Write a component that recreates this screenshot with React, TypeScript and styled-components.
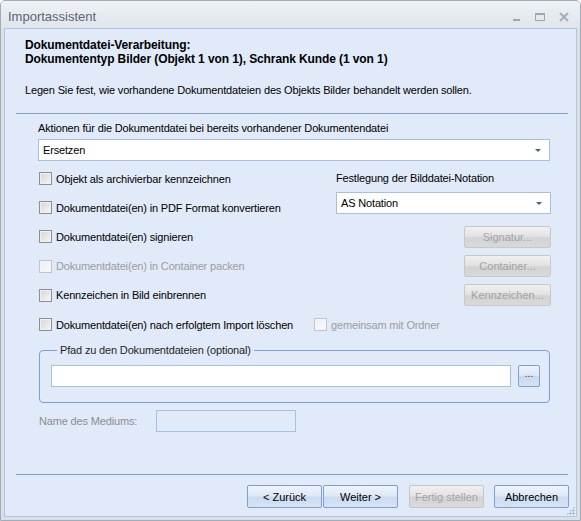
import styled, { createGlobalStyle } from 'styled-components';

const GlobalStyle = createGlobalStyle`
  html, body {
    margin: 0;
    padding: 0;
    width: 581px;
    height: 521px;
    overflow: hidden;
    background: #ffffff;
  }
  body {
    font-family: "Liberation Sans", Arial, sans-serif;
    font-size: 11px;
    letter-spacing: -0.16px;
    color: #000;
  }
`;

const Window = styled.div`
  box-sizing: border-box;
  width: 581px;
  height: 521px;
  display: flex;
  flex-direction: column;
  border: 1px solid #a3abb5;
  border-radius: 5px 5px 0 0;
  background: #d9e0e8;
`;

const TitleBar = styled.div`
  height: 27px;
  display: flex;
  align-items: center;
  justify-content: space-between;
  padding: 4px 10px 0 7px;
  box-sizing: border-box;
  background: linear-gradient(#eef1f5, #e0e5eb);
  border-radius: 4px 4px 0 0;
`;

const TitleText = styled.span`
  font-size: 13px;
  letter-spacing: 0;
  color: #5b6673;
`;

const TitleControls = styled.div`
  display: flex;
  align-items: center;
  gap: 12px;
`;

const Body = styled.div`
  flex: 1;
  display: flex;
  flex-direction: column;
  margin: 0 3px 3px 3px;
  border: 1px solid #b4c4d9;
  background: #e0eaf9;
  position: relative;
`;

const Header = styled.div`
  padding: 9px 0 0 20px;
  line-height: 14px;
`;

const HeaderTitle = styled.div`
  font-weight: bold;
  font-size: 12px;
  letter-spacing: -0.1px;
`;

const HeaderText = styled.div`
  margin-top: 17px;
`;

const Separator = styled.div<{ $top: number }>`
  height: 1px;
  margin: ${(p) => p.$top}px 8px 0 11px;
  background: #7f9fcf;
`;

const Main = styled.div`
  flex: 1;
  padding: 7px 26px 0 33px;
  line-height: 14px;
`;

const Label = styled.div<{ $muted?: boolean }>`
  color: ${(p) => (p.$muted ? '#8d8d8d' : '#000')};
`;

const Combo = styled.div<{ $width?: number }>`
  box-sizing: border-box;
  height: 22px;
  width: ${(p) => (p.$width ? `${p.$width}px` : '100%')};
  display: flex;
  align-items: center;
  justify-content: space-between;
  padding: 0 8px 0 4px;
  background: #fff;
  border: 1px solid #a9bfdc;
`;

const ComboArrow = styled.span`
  width: 0;
  height: 0;
  border-left: 3px solid transparent;
  border-right: 3px solid transparent;
  border-top: 3px solid #4d607c;
`;

const OptionsGrid = styled.div`
  display: grid;
  grid-template-columns: 275px 238px;
  grid-auto-rows: 29.2px;
  align-items: center;
  margin-top: 3px;
`;

const Check = styled.label<{ $disabled?: boolean }>`
  display: flex;
  align-items: center;
  gap: 4px;
  margin-left: 1px;
  white-space: nowrap;
  color: ${(p) => (p.$disabled ? '#9d9d9d' : '#000')};
`;

const Box = styled.span<{ $disabled?: boolean }>`
  box-sizing: border-box;
  width: 13px;
  height: 13px;
  border: 1px solid ${(p) => (p.$disabled ? '#c2c6cc' : '#8e8f8f')};
  background: ${(p) =>
    p.$disabled
      ? 'linear-gradient(135deg, #eceff3, #f9fafb)'
      : 'linear-gradient(135deg, #d6d6d6, #f6f6f6)'};
  box-shadow: inset 0 0 0 1px ${(p) => (p.$disabled ? '#f3f5f8' : '#f0f0f0')};
`;

const NotationBlock = styled.div`
  grid-row: span 2;
  align-self: start;
  display: flex;
  flex-direction: column;
  gap: 7px;
  padding: 7px 0 0 23px;
`;

const SideButton = styled.button`
  justify-self: end;
  box-sizing: border-box;
  width: 87px;
  height: 22px;
  font: inherit;
  color: #a3a3a3;
  border: 1px solid #c8c8c8;
  border-radius: 2px;
  background: linear-gradient(#f0f0f0 0%, #e3e3e3 45%, #d3d3d3 55%, #d9d9d9 100%);
  padding: 0;
`;

const PathGroup = styled.fieldset`
  margin: 4px 0 0 1px;
  padding: 8px 9px 15px 11px;
  border: 1px solid #7d9fd2;
  border-radius: 4px;
  display: flex;
  gap: 7px;
  align-items: center;
`;

const Legend = styled.legend`
  padding: 0 3px;
  margin-left: 6px;
  color: #1f1f1f;
  line-height: 14px;
`;

const TextInput = styled.div<{ $disabled?: boolean }>`
  box-sizing: border-box;
  height: 22px;
  flex: ${(p) => (p.$disabled ? '0 0 140px' : '1')};
  background: ${(p) => (p.$disabled ? 'transparent' : '#fff')};
  border: 1px solid ${(p) => (p.$disabled ? '#abc0da' : '#a9bfdc')};
`;

const BrowseButton = styled.button`
  box-sizing: border-box;
  width: 22px;
  height: 22px;
  padding: 0 0 4px;
  font: inherit;
  font-size: 10px;
  color: #3a2a6a;
  border: 1px solid #7f9fcf;
  border-radius: 2px;
  background: linear-gradient(#edf3fc 0%, #dce7f6 48%, #c9d9ef 52%, #d5e2f4 100%);
`;

const NameRow = styled.div`
  display: flex;
  align-items: center;
  margin: 7px 0 0 1px;
`;

const NameLabel = styled(Label)`
  width: 117px;
`;

const Footer = styled.div`
  display: flex;
  flex-direction: column;
`;

const ButtonRow = styled.div`
  display: flex;
  justify-content: flex-end;
  align-items: center;
  padding: 10px 7px 8px 0;
`;

const WizardButton = styled.button<{ $disabled?: boolean; $gap?: number }>`
  box-sizing: border-box;
  width: 75px;
  height: 23px;
  margin-left: ${(p) => p.$gap ?? 0}px;
  padding: 0;
  font: inherit;
  color: ${(p) => (p.$disabled ? '#a5a5a5' : '#000')};
  border: 1px solid ${(p) => (p.$disabled ? '#c6c6c6' : '#7f9fcf')};
  border-radius: 2px;
  background: ${(p) =>
    p.$disabled
      ? 'linear-gradient(#f0f0f0 0%, #e4e4e4 45%, #d4d4d4 55%, #dadada 100%)'
      : 'linear-gradient(#eef4fc 0%, #dfe9f7 45%, #cbdbf0 55%, #d6e3f5 100%)'};
`;

const Grip = styled.div`
  position: absolute;
  right: 1px;
  bottom: 1px;
  width: 9px;
  height: 9px;
  background-image: radial-gradient(circle, #aac0de 1px, transparent 1.2px);
  background-size: 3px 3px;
  clip-path: polygon(100% 0, 100% 100%, 0 100%);
`;

function TitleIcons() {
  return (
    <TitleControls>
      <svg width="10" height="10" viewBox="0 0 10 10">
        <rect x="1" y="7" width="7" height="2" fill="#9ea8b3" />
      </svg>
      <svg width="12" height="10" viewBox="0 0 12 10">
        <rect x="1.5" y="1.5" width="9" height="7" fill="none" stroke="#9ea8b3" />
        <rect x="1" y="1" width="10" height="2" fill="#9ea8b3" />
      </svg>
      <svg width="12" height="10" viewBox="0 0 12 10">
        <path d="M2 1 L10 9 M10 1 L2 9" stroke="#a6b0ba" strokeWidth="2" />
      </svg>
    </TitleControls>
  );
}

function CheckItem({ label, disabled }: { label: string; disabled?: boolean }) {
  return (
    <Check $disabled={disabled}>
      <Box $disabled={disabled} />
      {label}
    </Check>
  );
}

export default function App() {
  return (
    <>
      <GlobalStyle />
      <Window>
        <TitleBar>
          <TitleText>Importassistent</TitleText>
          <TitleIcons />
        </TitleBar>
        <Body>
          <Header>
            <HeaderTitle>Dokumentdatei-Verarbeitung:</HeaderTitle>
            <HeaderTitle>Dokumententyp Bilder (Objekt 1 von 1), Schrank Kunde (1 von 1)</HeaderTitle>
            <HeaderText>
              Legen Sie fest, wie vorhandene Dokumentdateien des Objekts Bilder behandelt werden sollen.
            </HeaderText>
          </Header>
          <Separator $top={16} />
          <Main>
            <Label>Aktionen für die Dokumentdatei bei bereits vorhandener Dokumentendatei</Label>
            <Combo style={{ marginTop: 4 }}>
              Ersetzen
              <ComboArrow />
            </Combo>
            <OptionsGrid>
              <CheckItem label="Objekt als archivierbar kennzeichnen" />
              <NotationBlock>
                <Label>Festlegung der Bilddatei-Notation</Label>
                <Combo $width={215}>
                  AS Notation
                  <ComboArrow />
                </Combo>
              </NotationBlock>
              <CheckItem label="Dokumentdatei(en) in PDF Format konvertieren" />
              <CheckItem label="Dokumentdatei(en) signieren" />
              <SideButton disabled>Signatur...</SideButton>
              <CheckItem label="Dokumentdatei(en) in Container packen" disabled />
              <SideButton disabled>Container...</SideButton>
              <CheckItem label="Kennzeichen in Bild einbrennen" />
              <SideButton disabled>Kennzeichen...</SideButton>
              <CheckItem label="Dokumentdatei(en) nach erfolgtem Import löschen" />
              <CheckItem label="gemeinsam mit Ordner" disabled />
            </OptionsGrid>
            <PathGroup>
              <Legend>Pfad zu den Dokumentdateien (optional)</Legend>
              <TextInput />
              <BrowseButton>...</BrowseButton>
            </PathGroup>
            <NameRow>
              <NameLabel $muted>Name des Mediums:</NameLabel>
              <TextInput $disabled />
            </NameRow>
          </Main>
          <Footer>
            <Separator $top={0} />
            <ButtonRow>
              <WizardButton>&lt; Zurück</WizardButton>
              <WizardButton $gap={1}>Weiter &gt;</WizardButton>
              <WizardButton $gap={11} $disabled disabled>
                Fertig stellen
              </WizardButton>
              <WizardButton $gap={10}>Abbrechen</WizardButton>
            </ButtonRow>
          </Footer>
          <Grip />
        </Body>
      </Window>
    </>
  );
}
